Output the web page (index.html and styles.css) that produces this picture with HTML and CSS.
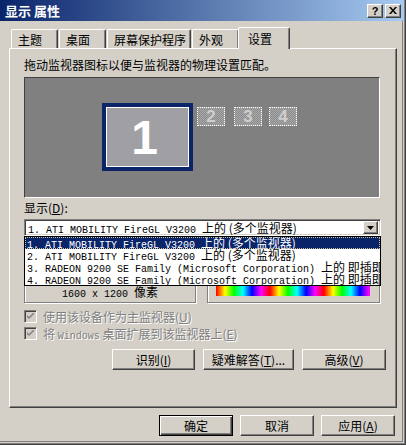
FILE: index.html
```html
<!DOCTYPE html>
<html>
<head>
  <meta charset="utf-8">
  <title>显示 属性</title>

  <!-- Dialog styling -->
  <link rel="stylesheet" href="styles.css">
</head>
<body>

  <div class="window">

    <!-- Title bar -->
    <div class="titlebar">
      <span class="title">显示 属性</span>
      <div class="caption-buttons">
        <span class="caption-btn help">?</span>
        <span class="caption-btn">
          <svg width="8" height="7" viewBox="0 0 8 7"><path d="M0 0h2l2 2.5L6 0h2L5 3.5 8 7H6L4 4.5 2 7H0l3-3.5z" fill="#000"/></svg>
        </span>
      </div>
    </div>

    <div class="content">

      <!-- Property sheet tabs -->
      <div class="tabs">
        <div class="tab">主题</div>
        <div class="tab">桌面</div>
        <div class="tab wide">屏幕保护程序</div>
        <div class="tab">外观</div>
        <div class="tab active">设置</div>
      </div>

      <!-- Settings page -->
      <div class="panel">
        <p class="hint">拖动监视器图标以便与监视器的物理设置匹配。</p>

        <!-- Monitor arrangement canvas -->
        <div class="arrange">
          <div class="monitor primary"><span>1</span></div>
          <div class="monitor ghost m2">2</div>
          <div class="monitor ghost m3">3</div>
          <div class="monitor ghost m4">4</div>
        </div>

        <div class="field-label">显示(<u>D</u>):</div>

        <!-- Display combo with its open list -->
        <div class="combo">
          <div class="combo-text"><span class="mono">1. ATI MOBILITY FireGL V3200 </span>上的 (多个监视器)</div>
          <span class="combo-btn">
            <svg width="7" height="4" viewBox="0 0 7 4"><path d="M0 0h7L3.5 4z" fill="#000"/></svg>
          </span>
          <ul class="dropdown">
            <li class="selected"><span class="mono">1. ATI MOBILITY FireGL V3200 </span>上的 (多个监视器)</li>
            <li><span class="mono">2. ATI MOBILITY FireGL V3200 </span>上的 (多个监视器)</li>
            <li><span class="mono">3. RADEON 9200 SE Family (Microsoft Corporation) </span>上的 即插即用</li>
            <li><span class="mono">4. RADEON 9200 SE Family (Microsoft Corporation) </span>上的 即插即用</li>
          </ul>
        </div>

        <!-- Resolution and colour groups (mostly hidden by the list) -->
        <div class="groups">
          <div class="group resolution">
            <span><span class="mono">1600 x 1200 </span>像素</span>
          </div>
          <div class="group colors">
            <div class="spectrum"></div>
          </div>
        </div>

        <!-- Disabled options -->
        <div class="check first">
          <span class="box"><svg width="7" height="7" viewBox="0 0 7 7"><path d="M0 2l2 2 5-5v2L2 6 0 4z" fill="#808080"/></svg></span>
          <span class="check-label">使用该设备作为主监视器(<u>U</u>)</span>
        </div>
        <div class="check">
          <span class="box"><svg width="7" height="7" viewBox="0 0 7 7"><path d="M0 2l2 2 5-5v2L2 6 0 4z" fill="#808080"/></svg></span>
          <span class="check-label">将 <span class="mono">Windows</span> 桌面扩展到该监视器上(<u>E</u>)</span>
        </div>

        <div class="actions">
          <button class="btn identify">识别(<u>I</u>)</button>
          <button class="btn trouble">疑难解答(<u>T</u>)...</button>
          <button class="btn advanced">高级(<u>V</u>)</button>
        </div>
      </div>

      <!-- Dialog buttons -->
      <div class="footer">
        <button class="btn dialog default">确定</button>
        <button class="btn dialog">取消</button>
        <button class="btn dialog">应用(<u>A</u>)</button>
      </div>

    </div>
  </div>

</body>
</html>
```

FILE: styles.css
```css
/* Page base */
body {
  margin: 0;
  font-family: "Noto Sans CJK SC", "Liberation Sans", sans-serif;
  font-size: 12px;
  line-height: 12px;
  color: #000;
}

/* Dialog window frame */
.window {
  width: 406px;
  height: 445px;
  box-sizing: border-box;
  background: #d4d0c8;
  border-right: 1px solid #404040;
  border-bottom: 1px solid #404040;
  box-shadow: inset -1px -1px #808080, inset -2px -2px #d4d0c8, inset -3px -3px #808080;
  overflow: hidden;
}

/* Title bar */
.titlebar {
  height: 21px;
  margin-right: 1px;
  display: flex;
  align-items: center;
  justify-content: space-between;
  background: linear-gradient(to right, #0a246a, #a6caf0);
}

.title {
  color: #fff;
  font-weight: bold;
  font-size: 13px;
  line-height: 13px;
  padding-left: 5px;
}

.caption-buttons {
  display: flex;
  gap: 2px;
  padding-right: 3px;
}

.caption-btn {
  width: 16px;
  height: 14px;
  box-sizing: border-box;
  display: flex;
  align-items: center;
  justify-content: center;
  background: #d4d0c8;
  border: 1px solid;
  border-color: #fff #404040 #404040 #fff;
  box-shadow: inset -1px -1px #808080;
}

.caption-btn.help {
  font-family: "Liberation Sans", sans-serif;
  font-weight: bold;
  font-size: 11px;
}

/* Area below the title bar */
.content {
  padding: 6px 0 0 9px;
}

/* Tabs */
.tabs {
  display: flex;
  align-items: flex-end;
  height: 21px;
  padding-left: 2px;
  position: relative;
  z-index: 1;
}

.tab {
  height: 19px;
  min-width: 47px;
  box-sizing: border-box;
  margin-right: 1px;
  padding: 4px 4px 0 6px;
  border: 1px solid;
  border-bottom: none;
  border-color: #fff #404040 #404040 #fff;
  border-radius: 2px 2px 0 0;
  box-shadow: inset -1px 0 #808080;
  background: #d4d0c8;
}

.tab.wide {
  min-width: 82px;
}

.tab.active {
  height: 22px;
  min-width: 52px;
  margin: 0 0 -1px -2px;
  padding: 5px 4px 0 9px;
}

/* Tab page */
.panel {
  width: 388px;
  height: 360px;
  box-sizing: border-box;
  padding-left: 14px;
  border: 1px solid;
  border-color: #fff #404040 #404040 #fff;
  box-shadow: inset -1px -1px #808080;
}

.hint {
  margin: 10px 0 0;
  height: 12px;
}

/* Monitor arrangement canvas */
.arrange {
  position: relative;
  width: 356px;
  height: 121px;
  margin-top: 6px;
  box-sizing: border-box;
  background: #808080;
  border: 1px solid;
  border-color: #404040 #fff #fff #404040;
}

.monitor {
  position: absolute;
  box-sizing: border-box;
  display: flex;
  align-items: center;
  justify-content: center;
  font-family: "Liberation Sans", sans-serif;
  font-weight: bold;
}

.monitor.primary {
  left: 77px;
  top: 25px;
  width: 91px;
  height: 68px;
  border: 4px solid #0c2468;
  background: #a0a0a4;
  box-shadow: inset 0 0 0 1px #fff;
  color: #fff;
  font-size: 48px;
  line-height: 48px;
}

.monitor.primary span {
  margin: 2px 6px 0 0;
}

.monitor.ghost {
  top: 29px;
  width: 28px;
  height: 19px;
  border: 1px dotted #fff;
  background: repeating-conic-gradient(#8c8c8c 0 25%, #a8a8a8 0 50%) 0 0 / 2px 2px;
  color: #cfcfcf;
  font-size: 17px;
  line-height: 17px;
}

.monitor.m2 { left: 172px; }
.monitor.m3 { left: 209px; }
.monitor.m4 { left: 244px; }

.field-label {
  margin-top: 4px;
  height: 12px;
}

/* Half-width glyphs of the bitmap font: 6px per character */
.mono {
  font-family: "Liberation Mono", monospace;
  font-size: 10px;
  line-height: 0;
}

/* Combo box */
.combo {
  position: relative;
  width: 357px;
  height: 17px;
  margin-top: 5px;
  box-sizing: border-box;
  background: #fff;
  border: 1px solid;
  border-color: #808080 #fff #fff #808080;
  box-shadow: inset 1px 1px #404040, inset -1px -1px #d4d0c8;
  display: flex;
  align-items: center;
}

.combo-text {
  flex: 1;
  padding-left: 3px;
  height: 12px;
  white-space: nowrap;
}

.combo-btn {
  width: 15px;
  height: 13px;
  margin-right: 2px;
  box-sizing: border-box;
  display: flex;
  align-items: center;
  justify-content: center;
  background: #d4d0c8;
  border: 1px solid;
  border-color: #fff #404040 #404040 #fff;
  box-shadow: inset -1px -1px #808080;
}

/* Open drop-down list */
.dropdown {
  position: absolute;
  left: -1px;
  top: 16px;
  width: 357px;
  margin: 0;
  padding: 0;
  list-style: none;
  box-sizing: border-box;
  background: #fff;
  border: 1px solid #000;
  overflow: hidden;
  z-index: 2;
}

.dropdown li {
  height: 12px;
  padding-left: 2px;
  white-space: nowrap;
}

.dropdown li.selected {
  background: #0a246a;
  color: #fff;
  outline: 1px dotted #c8c0a0;
  outline-offset: -1px;
}

/* Group boxes */
.groups {
  display: flex;
  gap: 11px;
  margin-top: 8px;
}

.group {
  height: 59px;
  box-sizing: border-box;
  border: 1px solid #808080;
  box-shadow: 1px 1px #fff, inset 1px 1px #fff;
  display: flex;
  flex-direction: column;
  justify-content: flex-end;
}

.group.resolution {
  width: 172px;
  align-items: center;
  padding-bottom: 4px;
}

.group.colors {
  width: 173px;
  padding: 0 0 6px 8px;
}

.spectrum {
  width: 154px;
  height: 10px;
  background: repeating-linear-gradient(to right,
    #ff0000 0, #ffff00 9px, #00ff00 18px, #00ffff 27px,
    #0000ff 36px, #ff00ff 45px, #ff0000 54px);
}

/* Disabled check boxes */
.check {
  display: flex;
  align-items: center;
  gap: 6px;
  height: 13px;
  margin-top: 4px;
}

.check.first {
  margin-top: 7px;
}

.check .box {
  width: 13px;
  height: 13px;
  box-sizing: border-box;
  display: flex;
  align-items: center;
  justify-content: center;
  background: #d4d0c8;
  border: 1px solid;
  border-color: #808080 #fff #fff #808080;
  box-shadow: inset 1px 1px #404040, inset -1px -1px #d4d0c8;
}

.check-label {
  color: #808080;
  text-shadow: 1px 1px 0 #fff;
}

/* Push buttons */
.btn {
  height: 21px;
  box-sizing: border-box;
  padding: 0;
  font-family: "Noto Sans CJK SC", "Liberation Sans", sans-serif;
  font-size: 12px;
  line-height: 12px;
  color: #000;
  background: #d4d0c8;
  border: 1px solid;
  border-color: #fff #404040 #404040 #fff;
  box-shadow: inset -1px -1px #808080;
}

.actions {
  display: flex;
  justify-content: flex-end;
  gap: 8px;
  margin-top: 9px;
  padding-right: 10px;
}

.btn.identify { width: 83px; }
.btn.trouble { width: 91px; }
.btn.advanced { width: 84px; }

/* Bottom dialog buttons */
.footer {
  display: flex;
  justify-content: flex-end;
  gap: 7px;
  width: 388px;
  margin-top: 7px;
  box-sizing: border-box;
  padding-right: 2px;
}

.btn.dialog {
  width: 74px;
}

.btn.default {
  border: 1px solid #000;
  box-shadow: inset 1px 1px #fff, inset -1px -1px #404040, inset -2px -2px #808080;
}
```
